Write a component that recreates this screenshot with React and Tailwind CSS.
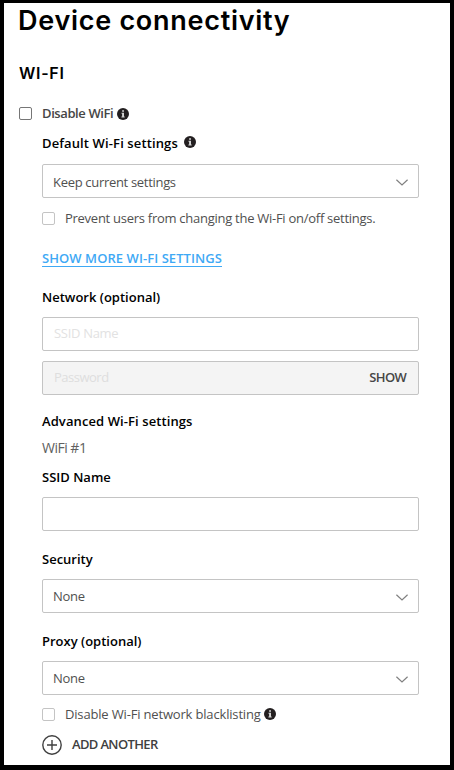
function InfoIcon({ className = '' }) {
  return (
    <svg className={`size-3 shrink-0 ${className}`} viewBox="0 0 12 12" aria-hidden="true">
      <circle cx="6" cy="6" r="6" fill="#231f20" />
      <path d="M5.1 2.2h1.9v1.6H5.1zM4.5 4.8H7v3.6h.7v1H4.4v-1h.7V5.8h-.6z" fill="#d4d4d4" />
    </svg>
  );
}

function Checkbox({ className }) {
  return <span className={`size-[13px] shrink-0 rounded-[2px] border bg-white ${className}`} />;
}

function Label({ children, className = '' }) {
  return (
    <div className={`flex h-5 items-center pt-0.5 text-[13px] font-semibold whitespace-nowrap text-black ${className}`}>
      {children}
    </div>
  );
}

function Select({ value, className = '', textClassName = 'pt-0.5' }) {
  return (
    <div className={`flex h-[34px] items-center justify-between rounded-[2px] border border-[#c4c4c4] px-[10px] ${className}`}>
      <span className={`text-[13px] tracking-[-0.31px] text-[#505050] ${textClassName}`}>{value}</span>
      <svg className="mt-[3px] h-[7px] w-3" viewBox="0 0 12 7" fill="none" stroke="#808080" strokeWidth="1.2" aria-hidden="true">
        <path d="M.4.7 6 5.9 11.6.7" />
      </svg>
    </div>
  );
}

export default function App() {
  return (
    <div className="h-[770px] w-[454px] border-x-4 border-t-3 border-b-5 border-black bg-white font-['Open_Sans',sans-serif]">
      <div className="flex flex-col pr-[31px] pl-[15px]">
        <h1 className="-ml-px flex h-9 items-center font-['Inter',sans-serif] text-[27px] font-semibold tracking-[0.72px] whitespace-nowrap">
          Device connectivity
        </h1>
        <h2 className="mt-[22px] flex h-6 items-center font-['Inter',sans-serif] text-[16px] font-semibold tracking-[0.7px]">
          WI-FI
        </h2>
        <div className="mt-[19px] flex h-5 items-center">
          <Checkbox className="mb-px border-[#767676]" />
          <span className="ml-[10px] text-[13px] font-semibold tracking-[-0.4px] text-[#464646]">Disable WiFi</span>
          <InfoIcon className="ml-1" />
        </div>

        <div className="flex flex-col pl-[23px]">
          <Label className="mt-[9px]">
            <span className="tracking-[0.12px]">Default Wi-Fi settings</span>
            <InfoIcon className="mb-1 ml-1.5" />
          </Label>
          <Select value="Keep current settings" className="mt-[11px]" textClassName="pt-[3px]" />
          <div className="mt-[10px] flex h-5 items-center">
            <Checkbox className="border-[#c4c4c4]" />
            <span className="ml-[10px] pt-0.5 text-[13px] tracking-[-0.27px] whitespace-nowrap text-[#505050]">
              Prevent users from changing the Wi-Fi on/off settings.
            </span>
          </div>
          <a className="mt-5 flex h-5 items-center pt-px text-[13px] font-semibold tracking-[0.06px] whitespace-nowrap text-[#3fa9f5]">
            <span className="border-b border-[#3fa9f5] leading-[15px]">SHOW MORE WI-FI SETTINGS</span>
          </a>
          <Label className="mt-[19px]">Network (optional)</Label>
          <div className="mt-[10px] flex h-[34px] items-center rounded-[2px] border border-[#c4c4c4] px-[11px] text-[13px] tracking-[-0.3px] text-[#e2e2e2]">
            SSID Name
          </div>
          <div className="mt-[10px] flex h-[34px] items-center justify-between rounded-[2px] border border-[#c4c4c4] bg-[#f4f4f4] px-[11px] text-[13px]">
            <span className="tracking-[-0.5px] text-[#dedede]">Password</span>
            <span className="mr-px font-semibold tracking-[-0.7px] text-[#464646]">SHOW</span>
          </div>
          <Label className="mt-4 tracking-[0.09px]">Advanced Wi-Fi settings</Label>
          <div className="mt-[7px] flex h-5 items-center pb-0.5 text-[14px] tracking-[-0.5px] text-[#606060]">WiFi #1</div>
          <Label className="mt-[9px]">SSID Name</Label>
          <div className="mt-[10px] h-[34px] rounded-[2px] border border-[#c4c4c4]" />
          <Label className="mt-[18px]">Security</Label>
          <Select value="None" className="mt-[10px]" />
          <Label className="mt-[18px]">Proxy (optional)</Label>
          <Select value="None" className="mt-[10px]" />
          <div className="mt-[9px] flex h-5 items-center">
            <Checkbox className="border-[#c4c4c4]" />
            <span className="ml-[10px] pt-0.5 text-[13px] tracking-[-0.17px] whitespace-nowrap text-[#505050]">
              Disable Wi-Fi network blacklisting
            </span>
            <InfoIcon className="ml-[3px]" />
          </div>
          <div className="mt-[11px] flex h-5 items-center">
            <svg className="size-5" viewBox="0 0 20 20" fill="none" stroke="#404040" strokeWidth="1.4" aria-hidden="true">
              <circle cx="10" cy="10" r="9.2" />
              <path d="M10 5v10M5 10h10" />
            </svg>
            <span className="ml-[10px] text-[13px] font-semibold tracking-[-0.65px] text-[#404040]">ADD ANOTHER</span>
          </div>
        </div>
      </div>
    </div>
  );
}
